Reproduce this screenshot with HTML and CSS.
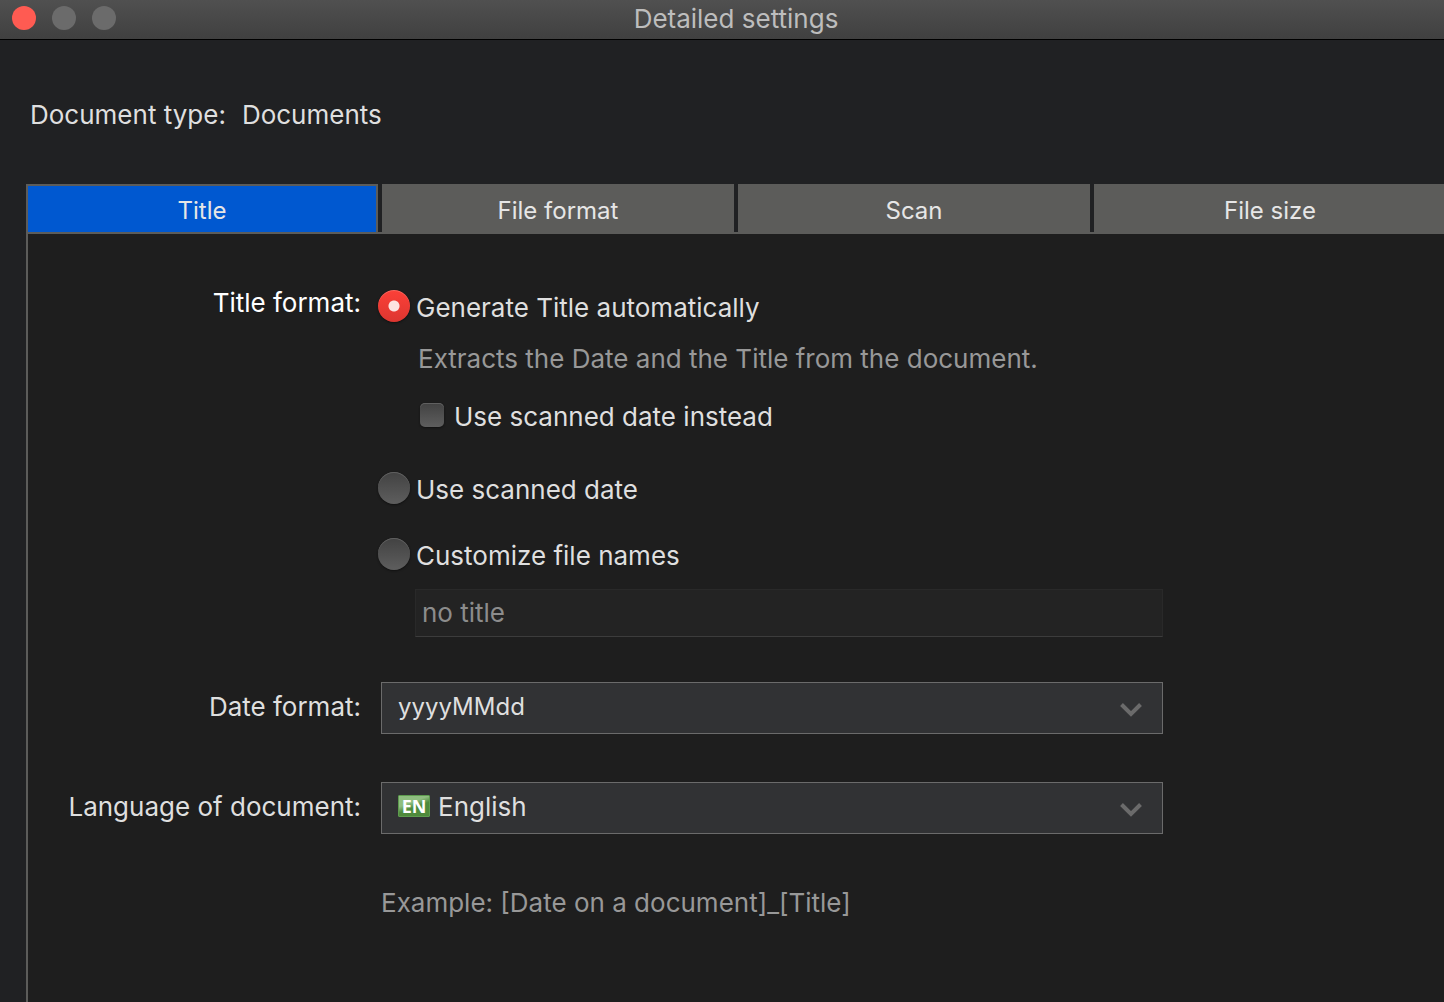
FILE: index.html
```html
<!DOCTYPE html>
<html lang="en">
<head>
<meta charset="utf-8">
<meta name="viewport" content="width=device-width, initial-scale=1">
<title>Detailed settings</title>
<link rel="stylesheet" href="styles.css">
</head>
<body>
<header class="titlebar">
  <div class="window-buttons">
    <button class="window-button window-button-close" type="button" aria-label="Close"></button>
    <button class="window-button" type="button" aria-label="Minimize" disabled></button>
    <button class="window-button" type="button" aria-label="Zoom" disabled></button>
  </div>
  <h1 class="window-title">Detailed settings</h1>
</header>
<main class="content">
  <p class="doc-type"><span>Document type:</span><span>Documents</span></p>
  <div class="tabs" role="tablist">
    <button class="tab tab-active" type="button" role="tab" aria-selected="true">Title</button>
    <button class="tab" type="button" role="tab" aria-selected="false">File format</button>
    <button class="tab" type="button" role="tab" aria-selected="false">Scan</button>
    <button class="tab" type="button" role="tab" aria-selected="false">File size</button>
  </div>
  <form class="panel">
    <span class="label label-strong" id="title-format">Title format:</span>
    <div class="options" role="radiogroup" aria-labelledby="title-format">
      <label class="option"><input class="radio" type="radio" name="title" checked><span>Generate Title automatically</span></label>
      <p class="hint">Extracts the Date and the Title from the document.</p>
      <label class="option option-nested"><input class="checkbox" type="checkbox"><span>Use scanned date instead</span></label>
      <label class="option option-date"><input class="radio" type="radio" name="title"><span>Use scanned date</span></label>
      <label class="option option-custom"><input class="radio" type="radio" name="title"><span>Customize file names</span></label>
      <input class="name-field" type="text" value="no title" aria-label="File name" disabled>
    </div>

    <label class="label" for="date-format">Date format:</label>
    <div class="select-box">
      <select class="select select-compact" id="date-format"><option>yyyyMMdd</option></select>
      <svg class="chevron" viewBox="0 0 22 14" aria-hidden="true"><path d="M1.500 1.500 11 11 20.500 1.500"/></svg>
    </div>

    <label class="label" for="language">Language of document:</label>
    <div class="select-box">
      <select class="select select-with-badge" id="language"><option>English</option></select>
      <span class="badge" aria-hidden="true">EN</span>
      <svg class="chevron" viewBox="0 0 22 14" aria-hidden="true"><path d="M1.500 1.500 11 11 20.500 1.500"/></svg>
    </div>

    <p class="example">Example: [Date on a document]_[Title]</p>
  </form>
</main>
</body>
</html>
```
FILE: styles.css
```css
* {
  box-sizing: border-box;
}

body {
  margin: 0;
  min-height: 100vh;
  display: flex;
  flex-direction: column;
  overflow: hidden;
  background: #202123;
  color: #dfdfdf;
  font: 26px/36px Inter, "Liberation Sans", sans-serif;
}

button,
input,
select {
  font: inherit;
  color: inherit;
  margin: 0;
}

p {
  margin: 0;
}

.titlebar {
  display: grid;
  grid-template-columns: 128px 1fr 100px;
  align-items: center;
  height: 40px;
  background: linear-gradient(#505050, #404040);
  border-bottom: 1px solid #000;
}

.window-buttons {
  display: flex;
  gap: 16px;
  padding: 0 0 3px 12px;
}

.window-button {
  width: 24px;
  height: 24px;
  padding: 0;
  border: 0;
  border-radius: 50%;
  background: #6b6b6b;
}

.window-button-close {
  background: #ff5b52;
}

.window-title {
  margin: 0;
  padding-bottom: 2px;
  font-size: 26px;
  font-weight: 400;
  text-align: center;
  color: #bdbdbd;
}

.content {
  flex: 1;
  display: flex;
  flex-direction: column;
  margin-right: -2px;
  padding: 57px 0 0 26px;
}

.doc-type {
  display: flex;
  gap: 16px;
  padding-left: 4px;
}

.tabs {
  display: grid;
  grid-template-columns: repeat(4, 1fr);
  gap: 4px;
  margin-top: 51px;
  border-bottom: 2px solid #5c5c5a;
}

.tab {
  height: 48px;
  padding: 4px 0 0;
  border: 2px solid #5c5c5a;
  border-bottom: 0;
  background: #5c5c5a;
  color: #e6e6e6;
  font-size: 24px;
  line-height: 32px;
}

.tab-active {
  background: #0058d0;
}

.panel {
  flex: 1;
  display: grid;
  grid-template-columns: 333px minmax(0, 782px);
  column-gap: 20px;
  align-content: start;
  padding: 51px 20px 0 0;
  border-left: 2px solid #5c5c5a;
  background: #1e1e1e;
}

.label {
  text-align: right;
  line-height: 50px;
}

.label-strong {
  line-height: 36px;
  color: #fff;
}

.options {
  display: flex;
  flex-direction: column;
  margin: 5px 0 45px -3px;
}

.option {
  display: flex;
  gap: 6px;
}

.option-nested {
  gap: 10px;
  margin: 22px 0 0 42px;
}

.option-date {
  margin-top: 37px;
}

.option-custom {
  margin-top: 30px;
}

.hint {
  margin: 15px 0 0 40px;
  color: #989898;
}

.radio,
.checkbox {
  appearance: none;
  flex: none;
  background: linear-gradient(#424242, #5e5e5e);
  box-shadow: inset 0 1px #606060, 0 1px 2px #111;
}

.radio {
  width: 32px;
  height: 32px;
  border-radius: 50%;
}

.radio:checked {
  background: radial-gradient(circle, #fde3e1 5px, transparent 6px), linear-gradient(#fc4038, #dd3630);
  box-shadow: inset 0 1px #fc6a62, 0 1px 2px #111;
}

.checkbox {
  width: 24px;
  height: 24px;
  margin-top: 4px;
  border-radius: 5px;
}

.name-field {
  height: 48px;
  margin: 15px 0 0 37px;
  padding: 0 6px 2px;
  border: 1px solid #292929;
  border-bottom-color: #3c3c3c;
  border-radius: 0;
  background: #232323;
  color: #8c8c8c;
}

.select-box {
  position: relative;
  margin-bottom: 48px;
}

.select {
  appearance: none;
  display: block;
  width: 100%;
  height: 52px;
  padding: 0 56px 2px 16px;
  border: 1px solid #6b6b6b;
  border-radius: 0;
  background: #313234;
}

.select-compact {
  font-size: 24px;
}

.select-with-badge {
  padding-left: 56px;
}

.badge {
  position: absolute;
  left: 17px;
  top: 13px;
  width: 32px;
  height: 22px;
  border: 1px solid #5d9b4e;
  border-radius: 1px;
  background: linear-gradient(160deg, #8fbe80 35%, #4f8a3c 55%);
  color: #fff;
  font: 700 18px/20px "Open Sans", sans-serif;
  text-align: center;
  pointer-events: none;
}

.chevron {
  position: absolute;
  right: 21px;
  top: 21px;
  width: 22px;
  height: 14px;
  fill: none;
  stroke: #6b6b6b;
  stroke-width: 4;
  pointer-events: none;
}

.example {
  grid-column: 2;
  padding-top: 3px;
  color: #989898;
}
```
